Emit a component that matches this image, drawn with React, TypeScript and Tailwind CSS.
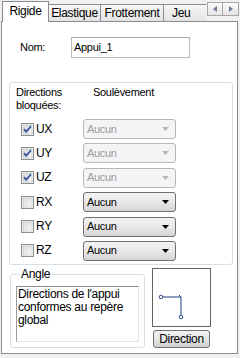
import React from 'react';

const font = { fontFamily: '"Liberation Sans", Arial, sans-serif' };

function Check({ checked }: { checked: boolean }) {
  return (
    <svg width="13" height="13" viewBox="0 0 13 13" className="shrink-0">
      <defs>
        <linearGradient id="cbg" x1="0" y1="0" x2="1" y2="1">
          <stop offset="0" stopColor="#d9d9d9" />
          <stop offset="1" stopColor="#f8f8f8" />
        </linearGradient>
      </defs>
      <rect x="0.5" y="0.5" width="12" height="12" fill="#f4f4f4" stroke="#8e8f8f" />
      <rect x="2" y="2" width="9" height="9" fill="url(#cbg)" stroke="#c4c4c4" strokeWidth="0.6" />
      {checked && (
        <path d="M3 6.2 L5.2 8.8 L10 3.2" fill="none" stroke="#3b569c" strokeWidth="1.8" />
      )}
    </svg>
  );
}

function Combo({ enabled }: { enabled: boolean }) {
  if (!enabled) {
    return (
      <div className="ml-auto flex h-[20px] w-[93px] items-center rounded-[3px] border border-[#b4b8bb] bg-[#f4f4f4] pl-[3px] pr-[6px] text-[#9c9c9c]">
        <span>Aucun</span>
        <svg width="7" height="4" viewBox="0 0 7 4" className="ml-auto">
          <path d="M0 0 H7 L3.5 4 Z" fill="#b8b8b8" />
        </svg>
      </div>
    );
  }
  return (
    <div className="ml-auto flex h-[20px] w-[93px] items-center rounded-[3px] border border-[#707070] bg-gradient-to-b from-[#f3f3f3] via-[#e8e8e8] to-[#d4d4d4] pl-[3px] pr-[6px] text-black">
      <span>Aucun</span>
      <svg width="7" height="4" viewBox="0 0 7 4" className="ml-auto">
        <path d="M0 0 H7 L3.5 4 Z" fill="#000" />
      </svg>
    </div>
  );
}

const rows = [
  { name: 'UX', checked: true },
  { name: 'UY', checked: true },
  { name: 'UZ', checked: true },
  { name: 'RX', checked: false },
  { name: 'RY', checked: false },
  { name: 'RZ', checked: false },
];

export default function App() {
  return (
    <div className="relative h-[358px] w-[240px] overflow-hidden bg-[#f0f0f0] text-[11px] leading-[13px] tracking-[-0.3px] text-black" style={font}>
      {/* onglets */}
      <div className="flex h-[21px] items-end pl-[2px]">
        <div className="relative z-10 mb-[-1px] flex h-[21px] w-[47px] items-center justify-center border border-b-0 border-[#898c95] bg-white pb-[1px] text-[12px]">
          Rigide
        </div>
        <div className="flex h-[17px] w-[52px] items-center justify-center border-t border-r border-[#898c95] bg-gradient-to-b from-[#f6f6f6] to-[#e3e3e3] pt-[1px] text-[12px]">
          Elastique
        </div>
        <div className="flex h-[17px] w-[63px] items-center justify-center border-t border-r border-[#898c95] bg-gradient-to-b from-[#f6f6f6] to-[#e3e3e3] pt-[1px] text-[12px]">
          Frottement
        </div>
        <div className="flex h-[17px] w-[42px] items-center border-t border-[#898c95] bg-gradient-to-b from-[#f6f6f6] to-[#e3e3e3] pl-[8px] pt-[1px] text-[12px]">
          Jeu
        </div>
        <div className="mb-[5px] ml-[1px] flex h-[14px] self-end">
          <div className="flex w-[16px] items-center justify-center border border-[#a7a7a7] bg-gradient-to-b from-[#fbfbfb] to-[#e4e4e4]">
            <svg width="4" height="6" viewBox="0 0 4 6"><path d="M4 0 V6 L0 3 Z" fill="#6b7a93" /></svg>
          </div>
          <div className="flex w-[16px] items-center justify-center border border-l-0 border-[#a7a7a7] bg-gradient-to-b from-[#fbfbfb] to-[#e4e4e4]">
            <svg width="4" height="6" viewBox="0 0 4 6"><path d="M0 0 V6 L4 3 Z" fill="#6b7a93" /></svg>
          </div>
        </div>
      </div>

      {/* panneau */}
      <div className="ml-[1px] h-[333px] w-[237px] border border-[#898c95] bg-white">
        <div className="mt-[15px] flex h-[21px] items-center">
          <span className="w-[69px] pl-[18px]">Nom:</span>
          <div className="flex h-[21px] w-[119px] items-center border border-[#b7b9bf] border-t-[#a5a7ad] pl-[2px]">
            Appui_1
          </div>
        </div>

        <div className="ml-[7px] mt-[24px] h-[183px] w-[224px] rounded-[3px] border border-[#d5dfe5]">
          <div className="flex pl-[6px] pt-[3px]">
            <div className="w-[77px]">
              Directions
              <br />
              bloquées:
            </div>
            <div>Soulèvement</div>
          </div>
          <div className="mt-[7px] flex flex-col gap-[4.4px] pl-[11px] pr-[56px]">
            {rows.map((r) => (
              <div key={r.name} className="flex h-[20px] items-center">
                <Check checked={r.checked} />
                <span className="ml-[2px] text-[12px]">{r.name}</span>
                <Combo enabled={!r.checked} />
              </div>
            ))}
          </div>
        </div>

        <div className="mt-[3px] flex">
          <fieldset className="ml-[8px] h-[80px] w-[135px] rounded-[3px] border border-[#d5dfe5] px-[5px]">
            <legend className="ml-[4px] px-[1px] text-[12px] leading-[13px]">Angle</legend>
            <div className="mt-[5px] h-[56px] w-[123px] border border-[#e2e3ea] border-l-[#9a9a9a] border-t-[#8d8d8d] pl-[1px] pt-[1px] text-[12px] leading-[13px]">
              Directions de l'appui
              <br />
              conformes au repère
              <br />
              global
            </div>
          </fieldset>
          <div className="ml-[7px] flex flex-col">
            <div className="h-[59px] w-[59px] border border-[#646464] bg-white">
              <svg width="57" height="57" viewBox="0 0 57 57">
                <path d="M8 28 H28 V48" fill="none" stroke="#1d3f7c" strokeWidth="1" />
                <path d="M26 26 L28 28" fill="none" stroke="#1d3f7c" strokeWidth="1" />
                <circle cx="8" cy="28" r="1.8" fill="white" stroke="#1d3f7c" strokeWidth="0.9" />
                <circle cx="28" cy="48" r="1.8" fill="white" stroke="#1d3f7c" strokeWidth="0.9" />
              </svg>
            </div>
            <div className="ml-[1px] mt-[3px] flex h-[18px] w-[57px] items-center justify-center rounded-[3px] border border-[#707070] bg-gradient-to-b from-[#f2f2f2] via-[#e6e6e6] to-[#d0d0d0] text-[12px]">
              Direction
            </div>
          </div>
        </div>
      </div>
    </div>
  );
}
